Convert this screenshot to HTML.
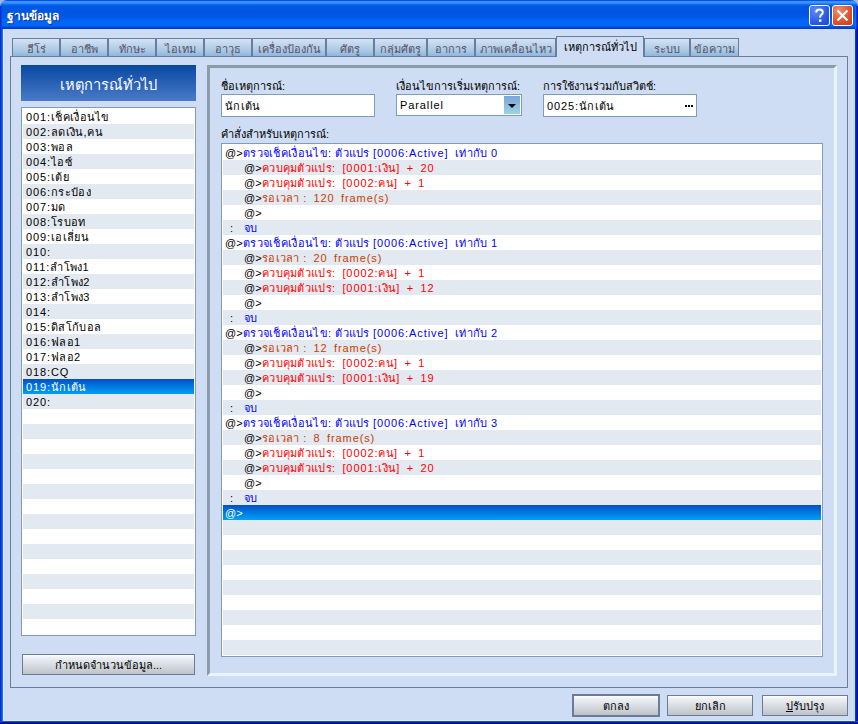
<!DOCTYPE html>
<html><head><meta charset="utf-8">
<style>
*{box-sizing:border-box;margin:0;padding:0}
html,body{width:858px;height:724px;overflow:hidden;background:#CEDDF3}
#cor{left:0;top:0;width:858px;height:10px;background:#A4B6E0}
body{position:relative;font-family:"Liberation Sans",sans-serif;font-size:11px;color:#000}
i{font-style:normal}
.a{position:absolute}
.L{letter-spacing:0.9px;word-spacing:2.5px}
.tx,#list .row,.fld{letter-spacing:0.3px}
#title{left:0;top:0;width:858px;height:29px;border-radius:7px 7px 0 0;
 background:linear-gradient(#0A50E4 0px,#0A50E4 1px,#3C92FF 1.5px,#3C92FF 3px,#0A6CF4 4.5px,#0058E4 6px,#0056E2 12px,#0058E6 17px,#0066FA 20.5px,#0066FA 25.5px,#0048D8 27.5px,#0034C4 29px)}
#bl{left:0;top:29px;width:3px;height:695px;background:linear-gradient(90deg,#0830D0 0,#0830D0 1px,#0A4AE8 1px,#0A4AE8 2px,#2070F8 2px)}
#br{left:855px;top:29px;width:3px;height:695px;background:linear-gradient(90deg,#0838E0 0,#0838E0 1px,#0020B8 1px,#0020B8 2px,#0010A0 2px)}
#bb{left:0;top:721px;width:858px;height:3px;background:linear-gradient(#1450E8 0,#1450E8 1px,#001CA8 1px,#001CA8 2px,#000A88 2px)}
#inl{left:3px;top:29px;width:852px;height:692px;border-left:1px solid #E2ECF8;border-bottom:1px solid #E2ECF8}
#ttl{left:7px;top:6px;font-weight:bold;font-size:12px;color:#fff;text-shadow:1px 1px 0 #0A2A90}
.tb{top:5px;width:21px;height:21px;border:1px solid #fff;border-radius:3px}
.tb svg{position:absolute;left:0;top:0}
#help{left:809px;background:radial-gradient(circle at 30% 25%,#5C8CF8,#2A5CE8 60%,#1A48D8)}
#close{left:832px;background:radial-gradient(circle at 30% 25%,#F09070,#E05028 60%,#C83C14)}
.tab{top:38px;height:18px;border:1px solid #6C7C9C;border-bottom:none;
 background:linear-gradient(#D4E2F4,#A8C8E4 70%,#8CB6DA);color:#5A5068;text-align:center;line-height:20px}
.seltab{top:36px;height:21px;background:#CEDDF3;color:#000;line-height:21px;z-index:2}
#panel{left:10px;top:56px;width:838px;height:632px;border:1px solid #6C7C9C;background:#CEDDF3}
#hdr{left:21px;top:65px;width:175px;height:36px;background:linear-gradient(#0848A0,#4A7AC8);color:#fff;font-size:14.6px;text-align:center;line-height:40px}
.lst{border:1px solid #7F9DB9;background:#fff;overflow:hidden}
#list{left:21px;top:107px;width:175px;height:529px}
#cmd{left:221px;top:143px;width:602px;height:514px}
.row{position:absolute;height:15px;line-height:15px;white-space:pre;padding-top:1px}
#list .row{left:1px;width:171px;padding-left:3px}
#cmd .row{left:1px;width:598px}
.at,.tx{position:absolute}
.g{background:#E3E9F1}
.sel{background:linear-gradient(#0050C4,#0078E0 50%,#00A0F4);color:#fff}
.btn{border:1px solid #6C7A94;background:linear-gradient(#FFFFFF 0%,#EEF1F5 12%,#DADEE4 50%,#BEC3C8 100%);text-align:center;line-height:19px}
#bcnt{left:22px;top:654px;width:173px;height:21px;line-height:20px}
#bok{left:572px;top:694px;width:88px;height:23px;border:2px solid #6A7C9C;line-height:20px}
.bb2{top:695px;width:86px;height:21px;line-height:20px}
#frame{left:207px;top:65px;width:630px;height:611px;border:3px solid;border-color:#8A9BAA #EAF4FF #EAF4FF #8A9BAA}
.fld{top:94px;border:1px solid #7F9DB9;background:#fff;height:23px;line-height:22px;padding-left:3px}
#combo{height:22px;line-height:20px}
.b{color:#0000FF}.r{color:#FF0000}.o{color:#C84000}
#dd{left:107px;top:1px;width:16px;height:18px;background:linear-gradient(#78A6D8,#9CD2E2)}
#arr{left:4px;top:8px;width:0;height:0;border-left:4px solid transparent;border-right:4px solid transparent;border-top:4px solid #000}
#dots{left:141px;top:10px;width:8px;height:2px;background:linear-gradient(90deg,#000 2px,transparent 2px,transparent 3px,#000 3px,#000 5px,transparent 5px,transparent 6px,#000 6px)}

#tl{left:0;top:6px;width:3px;height:23px;background:linear-gradient(90deg,#0830D0 0,#0830D0 1px,#0848E0 1px,#0848E0 2px,transparent 2px)}
#tr{left:855px;top:6px;width:3px;height:23px;background:linear-gradient(90deg,#1A62F0 0,#1A62F0 1px,#0840D8 1px,#0840D8 2px,#0628B8 2px)}

.f{display:inline-block;white-space:pre;transform-origin:0 50%}
.f.c{transform-origin:50% 50%}
.tab,#hdr,.btn{display:flex;justify-content:center}

</style></head><body>
<div class="a" id="cor"></div>
<div class="a" id="title"></div>
<div class="a" id="ttl"><span class="f">ฐานข้อมูล</span></div>
<div class="a tb" id="help"><svg width="19" height="19" viewBox="0 0 19 19"><path d="M6.2 6.6 C6.2 4.6 7.6 3.6 9.5 3.6 C11.4 3.6 12.8 4.7 12.8 6.4 C12.8 8.2 10.4 8.7 10.2 10.6 L10.2 11.6" fill="none" stroke="#fff" stroke-width="2"/><rect x="9" y="13.4" width="2.4" height="2.4" fill="#fff"/></svg></div>
<div class="a tb" id="close"><svg width="19" height="19" viewBox="0 0 19 19"><path d="M4.5 4.5 L14.5 14.5 M14.5 4.5 L4.5 14.5" stroke="#fff" stroke-width="2.2"/></svg></div>
<div class="a" id="inl"></div><div class="a" id="tl"></div><div class="a" id="tr"></div><div class="a" id="bl"></div><div class="a" id="br"></div><div class="a" id="bb"></div>
<div class="a" id="panel"></div>
<div class="a tab" style="left:12px;width:48px"><span class="f c">ฮีโร่</span></div>
<div class="a tab" style="left:60px;width:48px"><span class="f c">อาชีพ</span></div>
<div class="a tab" style="left:108px;width:48px"><span class="f c">ทักษะ</span></div>
<div class="a tab" style="left:156px;width:48px"><span class="f c">ไอเทม</span></div>
<div class="a tab" style="left:204px;width:48px"><span class="f c">อาวุธ</span></div>
<div class="a tab" style="left:252px;width:74px"><span class="f c">เครื่องป้องกัน</span></div>
<div class="a tab" style="left:326px;width:48px"><span class="f c">ศัตรู</span></div>
<div class="a tab" style="left:374px;width:53px"><span class="f c">กลุ่มศัตรู</span></div>
<div class="a tab" style="left:427px;width:48px"><span class="f c">อาการ</span></div>
<div class="a tab" style="left:475px;width:81px"><span class="f c">ภาพเคลื่อนไหว</span></div>
<div class="a tab seltab" style="left:556px;width:88px"><span class="f c">เหตุการณ์ทั่วไป</span></div>
<div class="a tab" style="left:644px;width:46px"><span class="f c">ระบบ</span></div>
<div class="a tab" style="left:690px;width:49px"><span class="f c">ข้อความ</span></div>
<div class="a" id="hdr"><span class="f c">เหตุการณ์ทั่วไป</span></div>
<div class="a lst" id="list">
<div class="row" style="top:1px"><span class="f"><i class="L">001:</i>เช็คเงื่อนไข</span></div>
<div class="row g" style="top:16px"><span class="f"><i class="L">002:</i>ลดเงิน<i class="L">,</i>คน</span></div>
<div class="row" style="top:31px"><span class="f"><i class="L">003:</i>พอล</span></div>
<div class="row g" style="top:46px"><span class="f"><i class="L">004:</i>ไอซ์</span></div>
<div class="row" style="top:61px"><span class="f"><i class="L">005:</i>เต้ย</span></div>
<div class="row g" style="top:76px"><span class="f"><i class="L">006:</i>กระป๋อง</span></div>
<div class="row" style="top:91px"><span class="f"><i class="L">007:</i>มด</span></div>
<div class="row g" style="top:106px"><span class="f"><i class="L">008:</i>โรบอท</span></div>
<div class="row" style="top:121px"><span class="f"><i class="L">009:</i>เอเลี่ยน</span></div>
<div class="row g" style="top:136px"><span class="f"><i class="L">010:</i></span></div>
<div class="row" style="top:151px"><span class="f"><i class="L">011:</i>ลำโพง<i class="L">1</i></span></div>
<div class="row g" style="top:166px"><span class="f"><i class="L">012:</i>ลำโพง<i class="L">2</i></span></div>
<div class="row" style="top:181px"><span class="f"><i class="L">013:</i>ลำโพง<i class="L">3</i></span></div>
<div class="row g" style="top:196px"><span class="f"><i class="L">014:</i></span></div>
<div class="row" style="top:211px"><span class="f"><i class="L">015:</i>ดิสโก้บอล</span></div>
<div class="row g" style="top:226px"><span class="f"><i class="L">016:</i>ฟลอ<i class="L">1</i></span></div>
<div class="row" style="top:241px"><span class="f"><i class="L">017:</i>ฟลอ<i class="L">2</i></span></div>
<div class="row g" style="top:256px"><span class="f"><i class="L">018:CQ</i></span></div>
<div class="row sel" style="top:271px"><span class="f"><i class="L">019:</i>นักเต้น</span></div>
<div class="row g" style="top:286px"><span class="f"><i class="L">020:</i></span></div>
<div class="row" style="top:301px"></div>
<div class="row g" style="top:316px"></div>
<div class="row" style="top:331px"></div>
<div class="row g" style="top:346px"></div>
<div class="row" style="top:361px"></div>
<div class="row g" style="top:376px"></div>
<div class="row" style="top:391px"></div>
<div class="row g" style="top:406px"></div>
<div class="row" style="top:421px"></div>
<div class="row g" style="top:436px"></div>
<div class="row" style="top:451px"></div>
<div class="row g" style="top:466px"></div>
<div class="row" style="top:481px"></div>
<div class="row g" style="top:496px"></div>
<div class="row" style="top:511px"></div>
</div>
<div class="a btn" id="bcnt"><span class="f c">กำหนดจำนวนข้อมูล...</span></div>
<div class="a" id="frame"></div>
<div class="a lbl" style="left:221px;top:77px"><span class="f">ชื่อเหตุการณ์:</span></div>
<div class="a fld" style="left:221px;width:154px"><span class="f">นักเต้น</span></div>
<div class="a lbl" style="left:396px;top:77px"><span class="f">เงื่อนไขการเริ่มเหตุการณ์:</span></div>
<div class="a fld" id="combo" style="left:396px;width:126px"><span class="f"><i class="L">Parallel</i></span><div class="a" id="dd"><div class="a" id="arr"></div></div></div>
<div class="a lbl" style="left:543px;top:77px"><span class="f">การใช้งานร่วมกับสวิตช์:</span></div>
<div class="a fld" style="left:543px;width:154px"><span class="f"><i class="L">0025:</i>นักเต้น</span><div class="a" id="dots"></div></div>
<div class="a lbl" style="left:221px;top:125px"><span class="f">คำสั่งสำหรับเหตุการณ์:</span></div>
<div class="a lst" id="cmd">
<div class="row" style="top:1px"><span class="at" style="left:2px">@&gt;</span><span class="tx b" style="left:20px"><span class="f">ตรวจเช็คเงื่อนไข<i class="L">:</i> ตัวแปร <i class="L">[0006:Active]</i>  เท่ากับ <i class="L">0</i></span></span></div>
<div class="row g" style="top:16px"><span class="at" style="left:21px">@&gt;</span><span class="tx r" style="left:39px"><span class="f">ควบคุมตัวแปร<i class="L">: [0001:</i>เงิน<i class="L">] + 20</i></span></span></div>
<div class="row" style="top:31px"><span class="at" style="left:21px">@&gt;</span><span class="tx r" style="left:39px"><span class="f">ควบคุมตัวแปร<i class="L">: [0002:</i>คน<i class="L">] + 1</i></span></span></div>
<div class="row g" style="top:46px"><span class="at" style="left:21px">@&gt;</span><span class="tx o" style="left:39px"><span class="f">รอเวลา <i class="L">: 120 frame(s)</i></span></span></div>
<div class="row" style="top:61px"><span class="at" style="left:21px">@&gt;</span></div>
<div class="row g" style="top:76px"><span class="at" style="left:7px">:</span><span class="tx b" style="left:21px"><span class="f">จบ</span></span></div>
<div class="row" style="top:91px"><span class="at" style="left:2px">@&gt;</span><span class="tx b" style="left:20px"><span class="f">ตรวจเช็คเงื่อนไข<i class="L">:</i> ตัวแปร <i class="L">[0006:Active]</i>  เท่ากับ <i class="L">1</i></span></span></div>
<div class="row g" style="top:106px"><span class="at" style="left:21px">@&gt;</span><span class="tx o" style="left:39px"><span class="f">รอเวลา <i class="L">: 20 frame(s)</i></span></span></div>
<div class="row" style="top:121px"><span class="at" style="left:21px">@&gt;</span><span class="tx r" style="left:39px"><span class="f">ควบคุมตัวแปร<i class="L">: [0002:</i>คน<i class="L">] + 1</i></span></span></div>
<div class="row g" style="top:136px"><span class="at" style="left:21px">@&gt;</span><span class="tx r" style="left:39px"><span class="f">ควบคุมตัวแปร<i class="L">: [0001:</i>เงิน<i class="L">] + 12</i></span></span></div>
<div class="row" style="top:151px"><span class="at" style="left:21px">@&gt;</span></div>
<div class="row g" style="top:166px"><span class="at" style="left:7px">:</span><span class="tx b" style="left:21px"><span class="f">จบ</span></span></div>
<div class="row" style="top:181px"><span class="at" style="left:2px">@&gt;</span><span class="tx b" style="left:20px"><span class="f">ตรวจเช็คเงื่อนไข<i class="L">:</i> ตัวแปร <i class="L">[0006:Active]</i>  เท่ากับ <i class="L">2</i></span></span></div>
<div class="row g" style="top:196px"><span class="at" style="left:21px">@&gt;</span><span class="tx o" style="left:39px"><span class="f">รอเวลา <i class="L">: 12 frame(s)</i></span></span></div>
<div class="row" style="top:211px"><span class="at" style="left:21px">@&gt;</span><span class="tx r" style="left:39px"><span class="f">ควบคุมตัวแปร<i class="L">: [0002:</i>คน<i class="L">] + 1</i></span></span></div>
<div class="row g" style="top:226px"><span class="at" style="left:21px">@&gt;</span><span class="tx r" style="left:39px"><span class="f">ควบคุมตัวแปร<i class="L">: [0001:</i>เงิน<i class="L">] + 19</i></span></span></div>
<div class="row" style="top:241px"><span class="at" style="left:21px">@&gt;</span></div>
<div class="row g" style="top:256px"><span class="at" style="left:7px">:</span><span class="tx b" style="left:21px"><span class="f">จบ</span></span></div>
<div class="row" style="top:271px"><span class="at" style="left:2px">@&gt;</span><span class="tx b" style="left:20px"><span class="f">ตรวจเช็คเงื่อนไข<i class="L">:</i> ตัวแปร <i class="L">[0006:Active]</i>  เท่ากับ <i class="L">3</i></span></span></div>
<div class="row g" style="top:286px"><span class="at" style="left:21px">@&gt;</span><span class="tx o" style="left:39px"><span class="f">รอเวลา <i class="L">: 8 frame(s)</i></span></span></div>
<div class="row" style="top:301px"><span class="at" style="left:21px">@&gt;</span><span class="tx r" style="left:39px"><span class="f">ควบคุมตัวแปร<i class="L">: [0002:</i>คน<i class="L">] + 1</i></span></span></div>
<div class="row g" style="top:316px"><span class="at" style="left:21px">@&gt;</span><span class="tx r" style="left:39px"><span class="f">ควบคุมตัวแปร<i class="L">: [0001:</i>เงิน<i class="L">] + 20</i></span></span></div>
<div class="row" style="top:331px"><span class="at" style="left:21px">@&gt;</span></div>
<div class="row g" style="top:346px"><span class="at" style="left:7px">:</span><span class="tx b" style="left:21px"><span class="f">จบ</span></span></div>
<div class="row sel" style="top:361px"><span class="at" style="left:2px">@&gt;</span></div>
<div class="row g" style="top:376px"></div>
<div class="row" style="top:391px"></div>
<div class="row g" style="top:406px"></div>
<div class="row" style="top:421px"></div>
<div class="row g" style="top:436px"></div>
<div class="row" style="top:451px"></div>
<div class="row g" style="top:466px"></div>
<div class="row" style="top:481px"></div>
<div class="row g" style="top:496px"></div>
</div>
<div class="a btn" id="bok"><span class="f c">ตกลง</span></div>
<div class="a btn bb2" style="left:667px"><span class="f c">ยกเลิก</span></div>
<div class="a btn bb2" style="left:762px"><span class="f c"><u>ป</u>รับปรุง</span></div>
<script>(function(){var W=[52, 19, 27, 27, 31, 26, 63, 20, 41, 32, 72, 73, 26, 41, 97, 83.72, 77.09, 46.92, 45.92, 42.92, 64.83, 39.63, 59.52, 62.83, 25.02, 63.44, 64.25, 64.25, 25.02, 75.13, 54.95, 54.95, 43.31, 60.52, 25.02, 107.17, 64.06, 35.5, 124.06, 43.89, 113.06, 67.53, 108.06, 255, 172.55, 163.23, 127.23, 13.61, 255, 120.22, 163.23, 172.55, 13.61, 255, 120.22, 163.23, 172.55, 13.61, 255, 113.19, 163.23, 172.55, 13.61, 26, 31, 38];var e=document.querySelectorAll(".f");if(e.length!==W.length)return;for(var i=0;i<e.length;i++){var w=e[i].getBoundingClientRect().width;if(w>0&&W[i]>0){var s=W[i]/w;if(Math.abs(s-1)>0.02)e[i].style.transform="scaleX("+s.toFixed(4)+")";}}})();</script>
</body></html>
